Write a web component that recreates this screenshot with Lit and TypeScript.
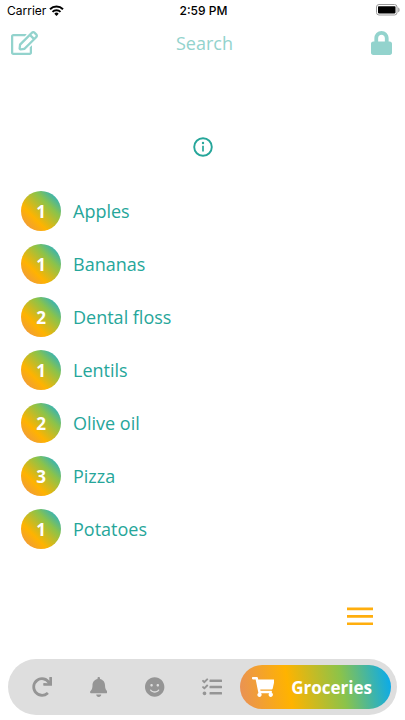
import { LitElement, html, css, svg } from "lit";
import { customElement, property } from "lit/decorators.js";

interface Icon {
  box: string;
  path: string;
}

const icons: Record<string, Icon> = {
  edit: {
    box: "0 0 576 512",
    path: "M402.3 344.9l32-32c5-5 13.7-1.5 13.7 5.7V464c0 26.5-21.5 48-48 48H48c-26.5 0-48-21.5-48-48V112c0-26.5 21.5-48 48-48h273.5c7.1 0 10.7 8.6 5.7 13.7l-32 32c-1.5 1.5-3.5 2.3-5.7 2.3H48v352h352V350.5c0-2.1.8-4.1 2.3-5.6zm156.6-201.8L296.3 405.7l-90.4 10c-26.2 2.9-48.5-19.2-45.6-45.6l10-90.4L432.9 17.1c22.9-22.9 59.9-22.9 82.7 0l43.2 43.2c22.9 22.9 22.9 60 .1 82.8zM460.1 174L402 115.9 216.2 301.8l-7.3 65.3 65.3-7.3L460.1 174zm64.8-79.7l-43.2-43.2c-4.1-4.1-10.8-4.1-14.8 0L436 82l58.1 58.1 30.9-30.9c4-4.2 4-10.8-.1-14.9z",
  },
  lock: {
    box: "0 0 448 512",
    path: "M400 224h-24v-72C376 68.2 307.8 0 224 0S72 68.2 72 152v72H48c-26.5 0-48 21.5-48 48v192c0 26.5 21.5 48 48 48h352c26.5 0 48-21.5 48-48V272c0-26.5-21.5-48-48-48zm-104 0H152v-72c0-39.7 32.3-72 72-72s72 32.3 72 72v72z",
  },
  redo: {
    box: "0 0 512 512",
    path: "M500.33 0h-47.41a12 12 0 0 0-12 12.57l4 82.76A247.42 247.42 0 0 0 256 8C119.34 8 7.9 119.53 8 256.19 8.1 393.07 119.1 504 256 504a247.1 247.1 0 0 0 166.18-63.91 12 12 0 0 0 .48-17.43l-34-34a12 12 0 0 0-16.38-.55A176 176 0 1 1 402.1 157.8l-101.53-4.87a12 12 0 0 0-12.57 12v47.41a12 12 0 0 0 12 12h200.33a12 12 0 0 0 12-12V12a12 12 0 0 0-12-12z",
  },
  bell: {
    box: "0 0 448 512",
    path: "M224 512c35.32 0 63.97-28.65 63.97-64H160.03c0 35.35 28.65 64 63.97 64zm215.39-149.71c-19.32-20.76-55.47-51.99-55.47-154.29 0-77.7-54.48-139.9-127.94-155.16V32c0-17.67-14.32-32-31.98-32s-31.98 14.33-31.98 32v20.84C118.56 68.1 64.08 130.3 64.08 208c0 102.3-36.15 133.53-55.47 154.29-6 6.45-8.66 14.16-8.61 21.71.11 16.4 12.98 32 32.1 32h383.8c19.12 0 32-15.6 32.1-32 .05-7.55-2.61-15.27-8.61-21.71z",
  },
  smile: {
    box: "0 0 496 512",
    path: "M248 8C111 8 0 119 0 256s111 248 248 248 248-111 248-248S385 8 248 8zm80 168c17.7 0 32 14.3 32 32s-14.3 32-32 32-32-14.3-32-32 14.3-32 32-32zm-160 0c17.7 0 32 14.3 32 32s-14.3 32-32 32-32-14.3-32-32 14.3-32 32-32zm194.8 170.2C334.3 380.4 292.5 400 248 400s-86.3-19.6-114.8-53.8c-13.6-16.3 11-36.7 24.6-20.5 22.4 26.9 55.2 42.2 90.2 42.2s67.8-15.4 90.2-42.2c13.4-16.2 38.1 4.2 24.6 20.5z",
  },
  tasks: {
    box: "0 0 512 512",
    path: "M139.61 35.5a12 12 0 0 0-17 0L58.93 98.81l-22.7-22.12a12 12 0 0 0-17 0L3.53 92.41a12 12 0 0 0 0 17l47.59 47.4a12.78 12.78 0 0 0 17.61 0l15.59-15.62L156.52 69a12.09 12.09 0 0 0 .09-17zm0 159.19a12 12 0 0 0-17 0l-63.68 63.72-22.7-22.1a12 12 0 0 0-17 0L3.53 252a12 12 0 0 0 0 17L51 316.5a12.77 12.77 0 0 0 17.6 0l15.7-15.69 72.2-72.22a12 12 0 0 0 .09-16.9zM64 368c-26.49 0-48.59 21.5-48.59 48S37.53 464 64 464a48 48 0 0 0 0-96zm432 16H208a16 16 0 0 0-16 16v32a16 16 0 0 0 16 16h288a16 16 0 0 0 16-16v-32a16 16 0 0 0-16-16zm0-320H208a16 16 0 0 0-16 16v32a16 16 0 0 0 16 16h288a16 16 0 0 0 16-16V80a16 16 0 0 0-16-16zm0 160H208a16 16 0 0 0-16 16v32a16 16 0 0 0 16 16h288a16 16 0 0 0 16-16v-32a16 16 0 0 0-16-16z",
  },
  cart: {
    box: "0 0 576 512",
    path: "M528.12 301.319l47.273-208C578.806 78.301 567.391 64 551.99 64H159.208l-9.166-44.81C147.758 8.021 137.93 0 126.529 0H24C10.745 0 0 10.745 0 24v16c0 13.255 10.745 24 24 24h69.883l70.248 343.435C147.325 417.1 136 435.222 136 456c0 30.928 25.072 56 56 56s56-25.072 56-56c0-15.674-6.447-29.835-16.824-40h209.647C430.447 426.165 424 440.326 424 456c0 30.928 25.072 56 56 56s56-25.072 56-56c0-22.172-12.888-41.332-31.579-50.405l5.517-24.276c3.413-15.018-8.002-29.319-23.403-29.319H218.117l-6.545-32h293.145c11.206 0 20.92-7.754 23.403-18.681z",
  },
};

@customElement("app-icon")
export class AppIcon extends LitElement {
  @property() name = "edit";

  static styles = css`
    :host {
      display: flex;
      height: 20px;
    }
    .glyph {
      display: block;
      height: 100%;
      fill: currentColor;
    }
  `;

  render() {
    const icon = icons[this.name];
    return html`<svg class="glyph" viewBox=${icon.box} aria-hidden="true">
      ${svg`<path d=${icon.path}></path>`}
    </svg>`;
  }
}

@customElement("app-root")
export class AppRoot extends LitElement {
  private items = [
    { count: 1, name: "Apples" },
    { count: 1, name: "Bananas" },
    { count: 2, name: "Dental floss" },
    { count: 1, name: "Lentils" },
    { count: 2, name: "Olive oil" },
    { count: 3, name: "Pizza" },
    { count: 1, name: "Potatoes" },
  ];

  private tabs = [
    { icon: "redo", label: "Recurring" },
    { icon: "bell", label: "Reminders" },
    { icon: "smile", label: "Mood" },
    { icon: "tasks", label: "Tasks" },
  ];

  static styles = css`
    :host {
      display: flex;
      flex-direction: column;
      box-sizing: border-box;
      min-height: 100vh;
      padding-bottom: 5px;
      background: #fff;
      color: #26a69a;
      font-family: "Open Sans", "Noto Sans", sans-serif;
      font-size: 18px;
      font-weight: 400;
    }
    button {
      display: flex;
      align-items: center;
      justify-content: center;
      margin: 0;
      padding: 0;
      border: 0;
      background: none;
      color: inherit;
      font: inherit;
      cursor: pointer;
    }
    .status {
      display: grid;
      grid-template-columns: 1fr auto 1fr;
      align-items: center;
      height: 20px;
      padding: 0 5px 0 7px;
      color: #000;
      font-family: Inter, "Liberation Sans", sans-serif;
      font-size: 12px;
    }
    .carrier {
      display: flex;
      align-items: center;
      gap: 3px;
    }
    .time {
      font-weight: 500;
    }
    .battery {
      justify-self: end;
    }
    .header {
      display: flex;
      align-items: center;
      justify-content: space-between;
      height: 46px;
      padding: 0 13px 0 11px;
      color: #93d3cd;
    }
    .header app-icon {
      height: 24px;
    }
    .search {
      flex: 1;
      min-width: 0;
      padding: 0;
      border: 0;
      outline: none;
      background: none;
      color: #26a69a;
      font: inherit;
      text-align: center;
    }
    .search::placeholder {
      color: #93d3cd;
      opacity: 1;
    }
    .info {
      align-self: center;
      margin: 71px 0 34px;
    }
    .list {
      display: flex;
      flex-direction: column;
      gap: 13px;
      margin: 0;
      padding: 0 21px;
      list-style: none;
    }
    .item {
      display: flex;
      align-items: center;
      gap: 12px;
      height: 40px;
    }
    .count {
      display: flex;
      align-items: center;
      justify-content: center;
      width: 40px;
      height: 40px;
      border-radius: 50%;
      background: linear-gradient(45deg, #e8905a 0%, #ffb300 33%, #8bc34a 67%, #03a9f4 100%);
      color: #fff;
      font-size: 17px;
      font-weight: 700;
    }
    .menu {
      align-self: flex-end;
      margin: auto 32px 33px 0;
    }
    .nav {
      display: flex;
      align-items: center;
      box-sizing: border-box;
      height: 56px;
      margin: 0 8px;
      padding: 0 6px;
      border-radius: 28px;
      background: #dedede;
      color: #959595;
    }
    .tab {
      flex: 1;
      height: 44px;
    }
    .active {
      gap: 17px;
      height: 44px;
      padding: 0 19px 0 12px;
      border-radius: 22px;
      background: linear-gradient(80deg, #e8905a 0%, #ffb300 33%, #8bc34a 67%, #03a9f4 100%);
      color: #fff;
      font-size: 17px;
      font-weight: 700;
    }
  `;

  render() {
    return html`
      <div class="status">
        <div class="carrier">
          <span>Carrier</span>
          <svg width="15" height="11" viewBox="0 0 15 11" aria-label="Wi-Fi">
            <g fill="none" stroke="#000" stroke-width="2">
              <path d="M1 4.2a9.3 9.3 0 0 1 13 0"></path>
              <path d="M3.5 6.9a5.7 5.7 0 0 1 8 0"></path>
            </g>
            <path d="M5.3 8.7a3.1 3.1 0 0 1 4.4 0L7.5 11z"></path>
          </svg>
        </div>
        <span class="time">2:59 PM</span>
        <svg class="battery" width="24" height="12" viewBox="0 0 24 12" aria-label="Battery full">
          <rect x="0.5" y="0.5" width="20.5" height="10.5" rx="2.5" fill="#fff" stroke="#999"></rect>
          <rect x="2" y="2.2" width="17.5" height="7.2" rx="0.8"></rect>
          <path d="M21.8 3.3q2 .8 2 2.6t-2 2.6z" fill="#aaa"></path>
        </svg>
      </div>

      <header class="header">
        <button aria-label="Edit"><app-icon name="edit"></app-icon></button>
        <input class="search" type="text" placeholder="Search" aria-label="Search" />
        <button aria-label="Lock"><app-icon name="lock"></app-icon></button>
      </header>

      <button class="info" aria-label="Information">
        <svg width="20" height="20" viewBox="0 0 20 20">
          <circle cx="10" cy="10" r="8.8" fill="none" stroke="#26a69a" stroke-width="1.9"></circle>
          <circle cx="10" cy="6" r="1.2" fill="#26a69a"></circle>
          <path d="M10 8.7v5.9" stroke="#26a69a" stroke-width="1.7"></path>
        </svg>
      </button>

      <ul class="list">
        ${this.items.map(
          (item) => html`<li class="item">
            <span class="count">${item.count}</span>
            <span>${item.name}</span>
          </li>`,
        )}
      </ul>

      <button class="menu" aria-label="Menu">
        <svg width="26" height="19" viewBox="0 0 26 19">
          <path d="M0 1.9h26M0 9.4h26M0 16.8h26" stroke="#ffae0d" stroke-width="2.6"></path>
        </svg>
      </button>

      <nav class="nav">
        ${this.tabs.map(
          (tab) => html`<button class="tab" aria-label=${tab.label}>
            <app-icon name=${tab.icon}></app-icon>
          </button>`,
        )}
        <button class="active" aria-current="page">
          <app-icon name="cart"></app-icon>
          <span>Groceries</span>
        </button>
      </nav>
    `;
  }
}
